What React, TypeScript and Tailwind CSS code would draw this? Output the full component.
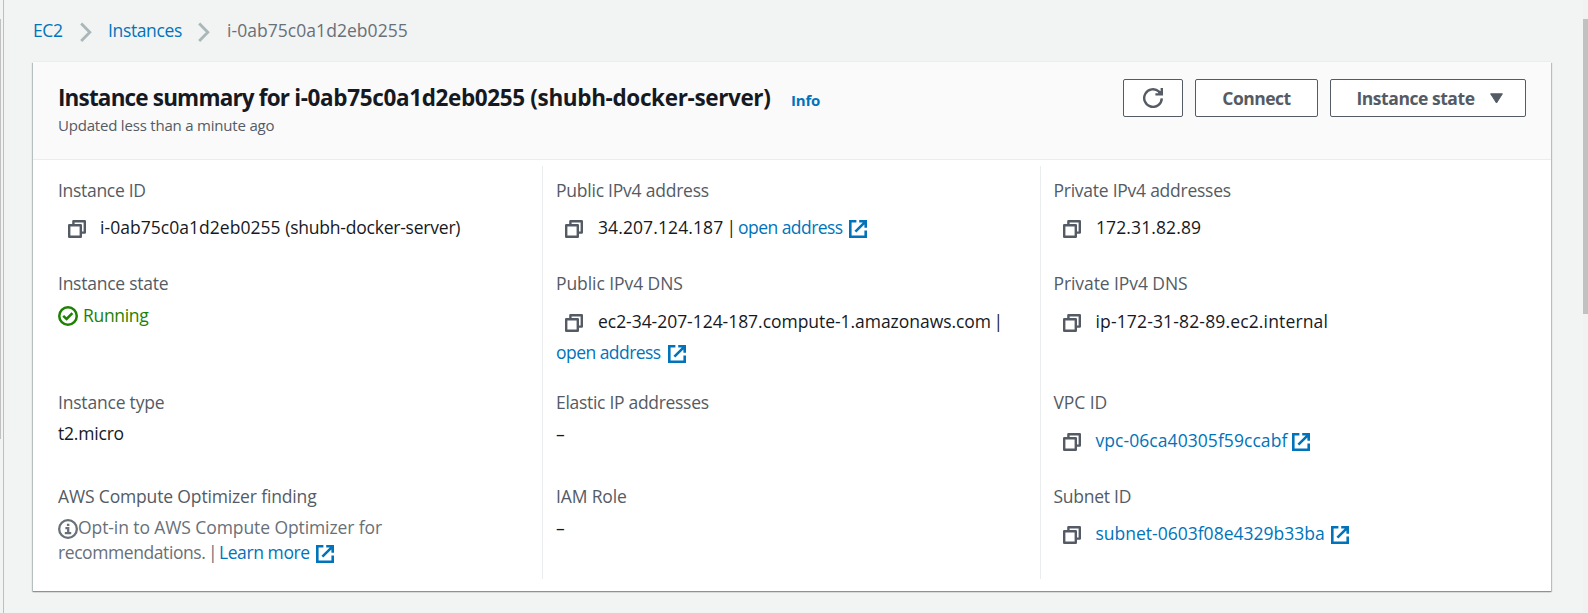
import React from "react";

type Kids = { children?: React.ReactNode; className?: string };

const Chevron = ({ className = "" }: { className?: string }) => (
  <svg className={`h-5 w-3 shrink-0 ${className}`} viewBox="0 0 12 20" fill="none" stroke="#aab7b8" strokeWidth="2.8">
    <path d="M1.2 1.4 9.8 10.2 1.2 19" />
  </svg>
);

const CopyIcon = ({ className = "ml-[10px] mr-[14px]" }: { className?: string }) => (
  <svg className={`mt-[5px] h-[18px] w-[18px] shrink-0 ${className}`} viewBox="0 0 18 18" fill="none" stroke="#545b64" strokeWidth="2.4" strokeLinejoin="round">
    <path d="M1.2 5.2h11.6v11.6H1.2z" />
    <path d="M5.4 5V1.2h11.4v11.4H13" />
  </svg>
);

const ExternalIcon = ({ className = "" }: { className?: string }) => (
  <svg className={`mt-[5px] h-[18px] w-[18px] shrink-0 ${className}`} viewBox="0 0 18 18" fill="none" stroke="#0073bb" strokeWidth="2.6">
    <path d="M7.4 1.3H1.3v15.4h15.4v-6.1" />
    <path d="M10.2 1.3h6.5v6.5M16.2 1.8 6.4 11.6" />
  </svg>
);

const CheckIcon = () => (
  <svg className="mt-[3px] h-5 w-5 shrink-0" viewBox="0 0 20 20" fill="none" stroke="#1d8102" strokeWidth="2.5">
    <circle cx="10" cy="10" r="8.75" />
    <path d="M5.2 9.8 8.6 13 14.4 7.2" />
  </svg>
);

const InfoIcon = () => (
  <svg className="mt-1 h-5 w-5 shrink-0" viewBox="0 0 20 20" fill="none" stroke="#687078" strokeWidth="2.3">
    <circle cx="10" cy="10" r="8.85" />
    <path d="M8.9 5.9h2.5M7.4 9.2h2.8v5M6.8 14.2h6.4" strokeWidth="2.3" />
  </svg>
);

const RefreshIcon = () => (
  <svg className="h-5 w-5" viewBox="0 0 20 20" fill="none" stroke="#545b64" strokeWidth="2.4">
    <path d="M18.8 10.4A8.8 8.8 0 1 1 16 3.6l1.6 1.6" />
    <path d="M18.8 0v6.4h-6.4" />
    <path d="M15 4.4h3.4" />
  </svg>
);

const Field = ({ label, tracking, children, className = "" }: Kids & { label: string; tracking: string }) => (
  <div className={className}>
    <div className={`text-[#545b64] ${tracking}`}>{label}</div>
    {children}
  </div>
);

const Row = ({ children, className = "" }: Kids) => <div className={`flex items-start ${className}`}>{children}</div>;

const Link = ({ children, className = "" }: Kids) => <a className={`text-[#0073bb] ${className}`}>{children}</a>;

const Button = ({ children, className = "" }: Kids) => (
  <button className={`flex h-[38px] items-center justify-center rounded-[2px] border border-[#545b64] bg-white font-bold text-[#545b64] ${className}`}>
    {children}
  </button>
);

export default function App() {
  return (
    <div className="flex h-[613px] w-full overflow-hidden whitespace-nowrap bg-[#f2f3f3] font-['Open_Sans','Noto_Sans',sans-serif] text-[17.5px] leading-[25px] text-[#16191f]">
      <div className="flex w-1 shrink-0 justify-between">
        <div className="mt-[19px] h-[420px] w-px bg-[#c1c1c1]" />
        <div className="w-px bg-[#bcbfc0]" />
      </div>

      <main className="flex min-w-0 flex-1 flex-col pl-[29px]">
        <nav className="flex h-[62px] items-start pt-[18px]">
          <Link className="w-[47px] tracking-[-0.4px]">EC2</Link>
          <Chevron className="mt-1" />
          <Link className="ml-4 w-[90px] tracking-[-0.36px]">Instances</Link>
          <Chevron className="mt-1" />
          <span className="ml-[17px] tracking-[0.05px] text-[#687078]">i-0ab75c0a1d2eb0255</span>
        </nav>

        <section className="h-[529px] w-[1518px] bg-white shadow-[0_1px_0_0_#879596,0_1px_1px_0_rgba(0,28,36,0.3),1px_1px_1px_0_rgba(0,28,36,0.2),-1px_1px_1px_0_rgba(0,28,36,0.2),0_-1px_0_0_#eaeded]">
          <header className="flex h-[98px] justify-between border-b border-[#eaeded] bg-[#fafafa] pl-[25px] pr-[25px]">
            <div>
              <div className="flex items-baseline pt-[21px]">
                <h1 className="w-[714px] text-[22.5px] font-bold leading-[30px] tracking-[-0.36px]">
                  <span className="tracking-[-0.83px]">Instance summary for </span>
                  i-0ab75c0a1d2eb0255 (shubh-docker-server)
                </h1>
                <Link className="ml-[19px] text-[15px] font-bold tracking-[-0.2px]">Info</Link>
              </div>
              <p className="mt-[1px] text-[15px] leading-[22px] tracking-[-0.2px] text-[#545b64]">Updated less than a minute ago</p>
            </div>
            <div className="flex gap-3 pt-[17px]">
              <Button className="w-[60px]"><RefreshIcon /></Button>
              <Button className="w-[123px] tracking-[-0.5px]">Connect</Button>
              <Button className="w-[196px] pl-[3px] tracking-[-0.45px]">
                Instance state
                <svg className="ml-[15px] h-[11px] w-[13px]" viewBox="0 0 13 11" fill="#545b64" stroke="#545b64" strokeLinejoin="round">
                  <path d="M.6.8h11.8L6.5 10z" />
                </svg>
              </Button>
            </div>
          </header>

          <div className="mt-[6px] grid h-[413px] grid-cols-[509px_498px_511px]">
            <div className="grid grid-rows-[93px_119px_94px_95px] pl-[25px] pt-3">
              <Field label="Instance ID" tracking="tracking-[-0.3px]">
                <Row className="mt-3">
                  <CopyIcon />
                  <span className="tracking-[0.04px]">i-0ab75c0a1d2eb0255&nbsp;</span>
                  <span className="tracking-[-0.22px]">(shubh-docker-server)</span>
                </Row>
              </Field>
              <Field label="Instance state" tracking="tracking-[-0.25px]">
                <Row className="mt-[7px] gap-[5px] text-[#1d8102]">
                  <CheckIcon />
                  <span className="tracking-[-0.31px]">Running</span>
                </Row>
              </Field>
              <Field label="Instance type" tracking="tracking-[-0.2px]">
                <div className="mt-[6px] tracking-[-0.2px]">t2.micro</div>
              </Field>
              <Field label="AWS Compute Optimizer finding" tracking="tracking-[-0.15px]">
                <Row className="mt-[6px] text-[#687078]">
                  <InfoIcon />
                  <span className="tracking-[-0.09px]">Opt-in to AWS Compute Optimizer for</span>
                </Row>
                <Row>
                  <span className="w-[161px] tracking-[-0.42px] text-[#687078] [word-spacing:-1.5px]">recommendations. |</span>
                  <Link className="tracking-[-0.42px]">Learn more</Link>
                  <ExternalIcon className="ml-[6px]" />
                </Row>
              </Field>
            </div>

            <div className="grid grid-rows-[93px_119px_94px_95px] border-l border-[#eaeded] pl-[13px] pt-3">
              <Field label="Public IPv4 address" tracking="tracking-[-0.23px]">
                <Row className="mt-3">
                  <CopyIcon className="ml-[9px] mr-[15px]" />
                  <span className="w-[140px] tracking-[0.1px] [word-spacing:-1.5px]">34.207.124.187 |</span>
                  <Link className="tracking-[-0.54px]">open address</Link>
                  <ExternalIcon className="ml-[6px]" />
                </Row>
              </Field>
              <Field label="Public IPv4 DNS" tracking="tracking-[-0.07px]">
                <Row className="mt-[13px]">
                  <CopyIcon className="ml-[9px] mr-[15px]" />
                  <span className="tracking-[-0.04px] [word-spacing:-2px]">ec2-34-207-124-187.compute-1.amazonaws.com |</span>
                </Row>
                <Row className="mt-[6px]">
                  <Link className="tracking-[-0.54px]">open address</Link>
                  <ExternalIcon className="ml-[7px]" />
                </Row>
              </Field>
              <Field label="Elastic IP addresses" tracking="tracking-[-0.3px]">
                <div className="mt-[7px]">–</div>
              </Field>
              <Field label="IAM Role" tracking="tracking-[-0.15px]">
                <div className="mt-[7px]">–</div>
              </Field>
            </div>

            <div className="grid grid-rows-[93px_119px_94px_95px] border-l border-[#eaeded] pl-[12.5px] pt-3">
              <Field label="Private IPv4 addresses" tracking="tracking-[-0.25px]">
                <Row className="mt-3">
                  <CopyIcon className="ml-[9.5px] mr-[15px]" />
                  <span className="tracking-[0.11px]">172.31.82.89</span>
                </Row>
              </Field>
              <Field label="Private IPv4 DNS" tracking="tracking-[-0.08px]">
                <Row className="mt-[13px]">
                  <CopyIcon className="ml-[9.5px] mr-[14.5px]" />
                  <span className="tracking-[0.15px]">ip-172-31-82-89.ec2.internal</span>
                </Row>
              </Field>
              <Field label="VPC ID" tracking="tracking-[-0.08px]">
                <Row className="mt-[13px]">
                  <CopyIcon className="ml-[9.5px] mr-[14.5px]" />
                  <Link className="tracking-[0.06px]">vpc-06ca40305f59ccabf</Link>
                  <ExternalIcon className="ml-[5px]" />
                </Row>
              </Field>
              <Field label="Subnet ID" tracking="tracking-[-0.26px]">
                <Row className="mt-3">
                  <CopyIcon className="ml-[9.5px] mr-[14.5px]" />
                  <Link>subnet-0603f08e4329b33ba</Link>
                  <ExternalIcon className="ml-[6px]" />
                </Row>
              </Field>
            </div>
          </div>
        </section>
      </main>

      <div className="w-[5px] shrink-0 bg-[#f1f1f1] pt-[19px]">
        <div className="h-[295px] bg-[#c1c1c1]" />
      </div>
    </div>
  );
}
